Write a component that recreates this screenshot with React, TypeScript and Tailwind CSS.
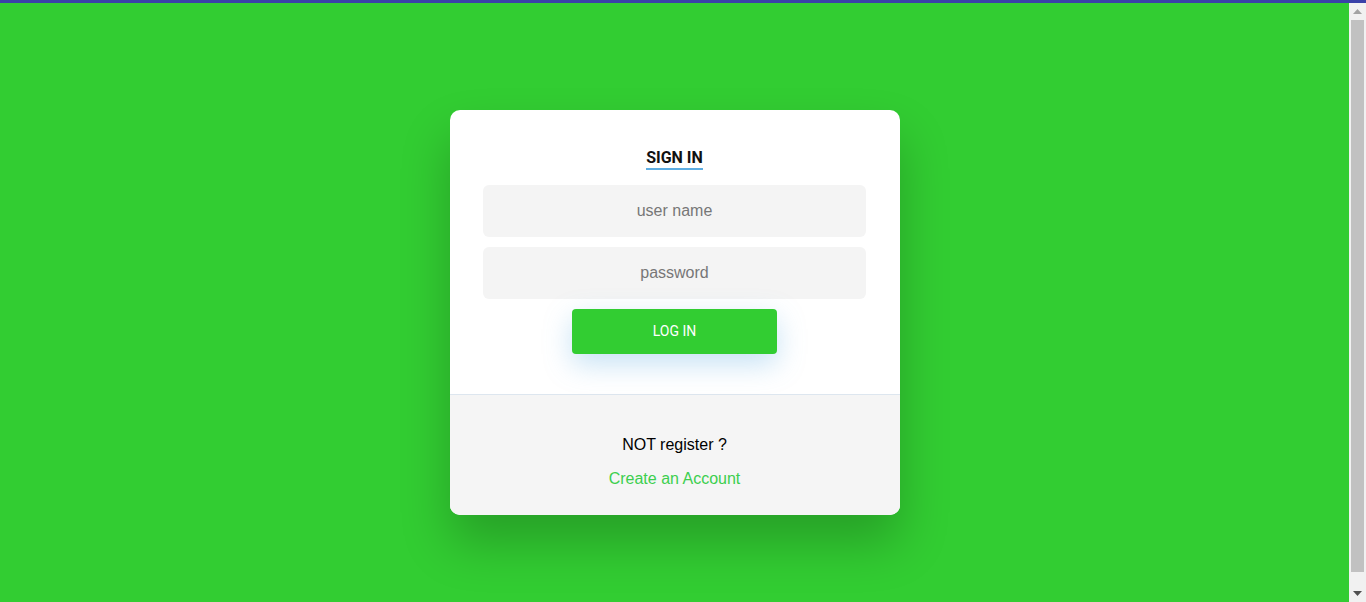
import React from 'react';

// Barra de desplazamiento dibujada (el navegador no la muestra)
function ScrollBar() {
  return (
    <div className="w-[17px] shrink-0 bg-[#f1f1f1] flex flex-col items-center">
      <div className="h-[17px] w-full flex items-center justify-center">
        <svg width="9" height="5" viewBox="0 0 9 5"><path d="M4.5 0 L9 5 L0 5 Z" fill="#a3a3a3" /></svg>
      </div>
      <div className="flex-1 w-[13px] ml-[2px] mr-[2px] bg-[#c1c1c1] mb-[13px]" />
      <div className="h-[17px] w-full flex items-center justify-center">
        <svg width="9" height="5" viewBox="0 0 9 5"><path d="M0 0 L9 0 L4.5 5 Z" fill="#505050" /></svg>
      </div>
    </div>
  );
}

export default function App() {
  return (
    <div className="border-t-[3px] border-[#3a41a8] bg-[#32cd32] flex h-[calc(100vh-3px)] box-content overflow-hidden">
      <div className="flex-1 flex justify-center pt-[107px]">
        <div className="w-[450px] h-fit rounded-[10px] overflow-hidden bg-white shadow-[0_28px_50px_rgba(0,0,0,0.22)]">
          {/* Formulario */}
          <div className="flex flex-col items-center px-[33px] pt-[38px] pb-[40px] border-b border-[#dde6ef]">
            <h2 className="font-['Roboto',sans-serif] text-[16px] leading-[20px] font-bold text-[#111] border-b-2 border-[#5dade2]">
              SIGN IN
            </h2>
            <input
              type="text"
              placeholder="user name"
              className="mt-[15px] w-[383px] h-[52px] rounded-[6px] bg-[#f4f4f4] text-center text-[16px] font-['Liberation_Sans',Arial,sans-serif] text-[#333] placeholder:text-[#777] outline-none"
            />
            <input
              type="password"
              placeholder="password"
              className="mt-[10px] w-[383px] h-[52px] rounded-[6px] bg-[#f4f4f4] text-center text-[16px] font-['Liberation_Sans',Arial,sans-serif] text-[#333] placeholder:text-[#777] outline-none"
            />
            <button className="mt-[10px] w-[205px] h-[45px] rounded-[4px] bg-[#32cd32] text-white text-[14px] font-normal font-['Roboto',sans-serif] shadow-[0_10px_28px_rgba(93,173,226,0.35)]">
              LOG IN
            </button>
          </div>

          {/* Registro */}
          <div className="bg-[#f5f5f5] flex flex-col items-center pt-[41px] pb-[27px] gap-[16px] font-['Liberation_Sans',Arial,sans-serif] text-[16px] leading-[18px]">
            <p className="text-black">NOT register ?</p>
            <a href="#" className="text-[#3ccf4e]">Create an Account</a>
          </div>
        </div>
      </div>
      <ScrollBar />
    </div>
  );
}
